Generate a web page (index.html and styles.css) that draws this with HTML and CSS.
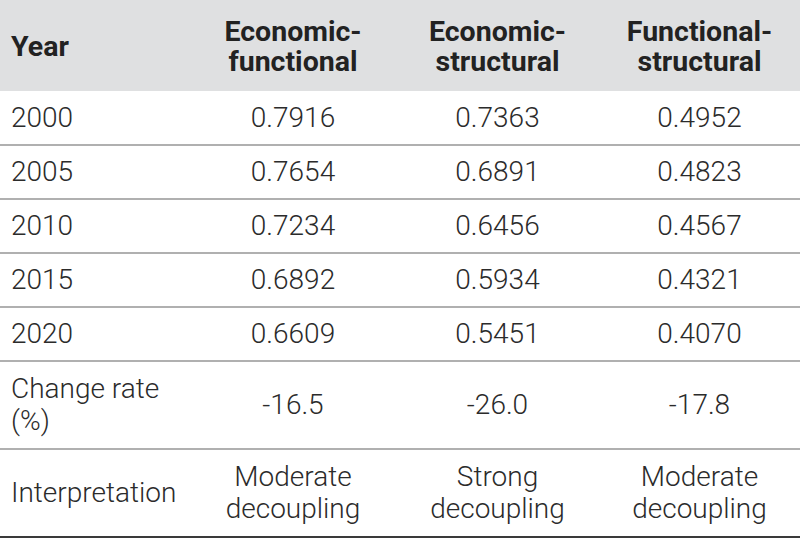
FILE: index.html
```html
<!DOCTYPE html>
<html>
<head>
<meta charset="utf-8">
<link rel="stylesheet" href="styles.css">
</head>
<body>
<table class="data">
  <colgroup>
    <col class="c1"><col class="c2"><col class="c3"><col class="c4">
  </colgroup>
  <thead>
    <tr class="head">
      <th class="first">Year</th>
      <th>Economic-<br>functional</th>
      <th>Economic-<br>structural</th>
      <th>Functional-<br>structural</th>
    </tr>
  </thead>
  <tbody>
    <tr class="row"><td class="first">2000</td><td>0.7916</td><td>0.7363</td><td>0.4952</td></tr>
    <tr class="row"><td class="first">2005</td><td>0.7654</td><td>0.6891</td><td>0.4823</td></tr>
    <tr class="row"><td class="first">2010</td><td>0.7234</td><td>0.6456</td><td>0.4567</td></tr>
    <tr class="row"><td class="first">2015</td><td>0.6892</td><td>0.5934</td><td>0.4321</td></tr>
    <tr class="row"><td class="first">2020</td><td>0.6609</td><td>0.5451</td><td>0.4070</td></tr>
    <tr class="tall"><td class="first">Change rate<br>(%)</td><td>-16.5</td><td>-26.0</td><td>-17.8</td></tr>
    <tr class="tall last"><td class="first">Interpretation</td><td>Moderate<br>decoupling</td><td>Strong<br>decoupling</td><td>Moderate<br>decoupling</td></tr>
  </tbody>
</table>
</body>
</html>
```
FILE: styles.css
```css
html, body {
  margin: 0;
  padding: 0;
  background: #ffffff;
}
.data {
  width: 800px;
  table-layout: fixed;
  border-collapse: collapse;
  font-family: Roboto, "Liberation Sans", sans-serif;
}
.c1 { width: 190px; }
.c2 { width: 206px; }
.c3 { width: 203px; }
.c4 { width: 201px; }
.data th, .data td {
  padding: 0;
  text-align: center;
  vertical-align: middle;
}
.data .first {
  text-align: left;
  padding-left: 11px;
}
.head {
  background: #dfe0e1;
  height: 91px;
}
.head th {
  font-weight: 700;
  font-size: 28.5px;
  line-height: 30px;
  padding-top: 3px;
  color: #222222;
}
.data td {
  font-weight: 300;
  font-size: 28px;
  line-height: 32px;
  color: #2b2b2b;
}
.row {
  height: 54px;
}
.tall {
  height: 88px;
}
.data tbody tr {
  border-top: 2px solid #b0b0b0;
}
.data tbody tr:first-child {
  border-top: none;
}
.last {
  border-bottom: 2px solid #3a3a3a;
}
```
